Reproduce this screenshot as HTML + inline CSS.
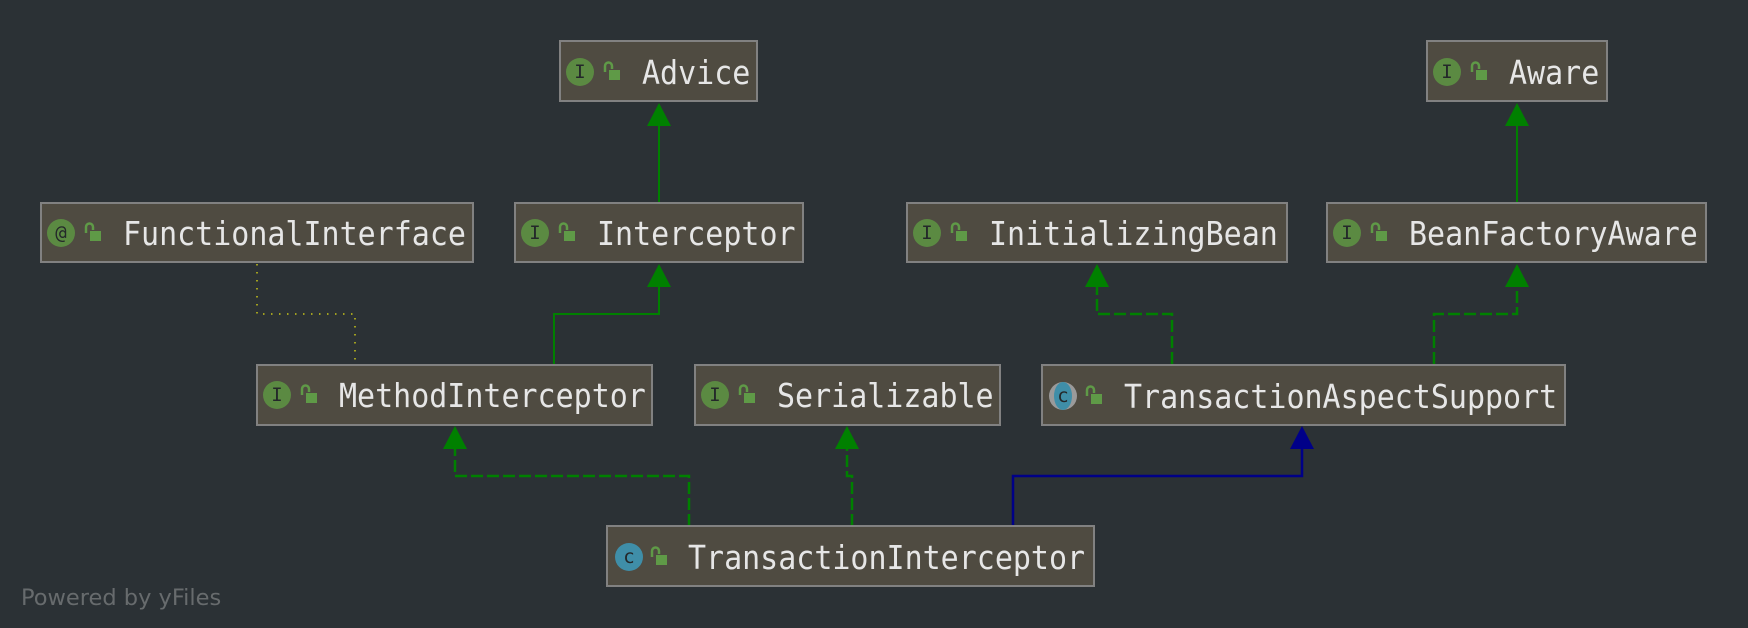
<!DOCTYPE html>
<html><head><meta charset="utf-8"><style>
html,body{margin:0;padding:0;background:#2b3135;width:1748px;height:628px;overflow:hidden}
svg{display:block}
.b{fill:#4f4b41;stroke:#818181;stroke-width:2}
.t{font-family:"DejaVu Sans Mono","Liberation Mono",monospace;font-size:30px;fill:#e6e6e6;transform-box:fill-box;transform-origin:center;transform:scaleY(1.1)}
.ic{font-family:"DejaVu Sans Mono","Liberation Mono",monospace;font-size:19px;fill:#24282a;text-anchor:middle}
.g{stroke:#008000;stroke-width:2;fill:none}
.d{stroke:#008000;stroke-width:2.5;fill:none;stroke-dasharray:12 4}
.ah{fill:#008000}
.lk{fill:#5f9a47}
.lks{stroke:#5f9a47;stroke-width:2.5;fill:none}
</style></head><body>
<svg width="1748" height="628" viewBox="0 0 1748 628" xmlns="http://www.w3.org/2000/svg">
<path class="g" d="M659 202V120"/><path class="ah" d="M659 103l-12 23h24z"/>
<path class="g" d="M1517 202V120"/><path class="ah" d="M1517 103l-12 23h24z"/>
<path class="g" d="M554 364V314H659V282"/><path class="ah" d="M659 264l-12 23h24z"/>
<path d="M257 264V314H355V364" stroke="#a0a020" stroke-width="2" fill="none" stroke-dasharray="1.5 6.5"/>
<path class="d" d="M1172 364V314H1097V285"/><path class="ah" d="M1097 264l-12 23h24z"/>
<path class="d" d="M1434 364V314H1517V285"/><path class="ah" d="M1517 264l-12 23h24z"/>
<path class="d" d="M689 526V476H455V447"/><path class="ah" d="M455 426l-12 23h24z"/>
<path class="d" d="M852 526V476H847V447"/><path class="ah" d="M847 426l-12 23h24z"/>
<path d="M1013 526V476H1302V447" stroke="#000088" stroke-width="2.5" fill="none"/><path d="M1302 426l-12 23h24z" fill="#000088"/>

<g>
<rect class="b" x="560" y="41" width="197" height="60"/>
<circle cx="580" cy="72" r="14" fill="#5b8a42"/><text class="ic" x="580" y="78">I</text>
<rect class="lk" x="609" y="70" width="11" height="10"/><path class="lks" d="M605 72V66a3.5 3.5 0 0 1 7 0v3"/>
<text class="t" x="642" y="83">Advice</text>
</g>
<g>
<rect class="b" x="1427" y="41" width="180" height="60"/>
<circle cx="1447" cy="72" r="14" fill="#5b8a42"/><text class="ic" x="1447" y="78">I</text>
<rect class="lk" x="1476" y="70" width="11" height="10"/><path class="lks" d="M1472 72V66a3.5 3.5 0 0 1 7 0v3"/>
<text class="t" x="1509" y="83">Aware</text>
</g>
<g>
<rect class="b" x="41" y="203" width="432" height="59"/>
<circle cx="61" cy="233" r="14" fill="#5b8a42"/><text class="ic" x="61" y="239">@</text>
<rect class="lk" x="90" y="231" width="11" height="10"/><path class="lks" d="M86 233V227a3.5 3.5 0 0 1 7 0v3"/>
<text class="t" x="123" y="244">FunctionalInterface</text>
</g>
<g>
<rect class="b" x="515" y="203" width="288" height="59"/>
<circle cx="535" cy="233" r="14" fill="#5b8a42"/><text class="ic" x="535" y="239">I</text>
<rect class="lk" x="564" y="231" width="11" height="10"/><path class="lks" d="M560 233V227a3.5 3.5 0 0 1 7 0v3"/>
<text class="t" x="597" y="244">Interceptor</text>
</g>
<g>
<rect class="b" x="907" y="203" width="380" height="59"/>
<circle cx="927" cy="233" r="14" fill="#5b8a42"/><text class="ic" x="927" y="239">I</text>
<rect class="lk" x="956" y="231" width="11" height="10"/><path class="lks" d="M952 233V227a3.5 3.5 0 0 1 7 0v3"/>
<text class="t" x="989" y="244">InitializingBean</text>
</g>
<g>
<rect class="b" x="1327" y="203" width="379" height="59"/>
<circle cx="1347" cy="233" r="14" fill="#5b8a42"/><text class="ic" x="1347" y="239">I</text>
<rect class="lk" x="1376" y="231" width="11" height="10"/><path class="lks" d="M1372 233V227a3.5 3.5 0 0 1 7 0v3"/>
<text class="t" x="1409" y="244">BeanFactoryAware</text>
</g>
<g>
<rect class="b" x="257" y="365" width="395" height="60"/>
<circle cx="277" cy="395" r="14" fill="#5b8a42"/><text class="ic" x="277" y="401">I</text>
<rect class="lk" x="306" y="393" width="11" height="10"/><path class="lks" d="M302 395V389a3.5 3.5 0 0 1 7 0v3"/>
<text class="t" x="339" y="406">MethodInterceptor</text>
</g>
<g>
<rect class="b" x="695" y="365" width="305" height="60"/>
<circle cx="715" cy="395" r="14" fill="#5b8a42"/><text class="ic" x="715" y="401">I</text>
<rect class="lk" x="744" y="393" width="11" height="10"/><path class="lks" d="M740 395V389a3.5 3.5 0 0 1 7 0v3"/>
<text class="t" x="777" y="406">Serializable</text>
</g>
<g>
<rect class="b" x="1042" y="365" width="523" height="60"/>
<ellipse cx="1063" cy="396" rx="14" ry="14" fill="#9a9a9a"/>
<ellipse cx="1063" cy="396" rx="9" ry="14" fill="#3f8ea8"/><text class="ic" x="1063" y="402">c</text>
<rect class="lk" x="1091" y="394" width="11" height="10"/><path class="lks" d="M1087 396V390a3.5 3.5 0 0 1 7 0v3"/>
<text class="t" x="1124" y="407">TransactionAspectSupport</text>
</g>
<g>
<rect class="b" x="607" y="526" width="487" height="60"/>
<circle cx="629" cy="557" r="14" fill="#3f8ea8"/><text class="ic" x="629" y="563">c</text>
<rect class="lk" x="656" y="555" width="11" height="10"/><path class="lks" d="M652 557V551a3.5 3.5 0 0 1 7 0v3"/>
<text class="t" x="688" y="568">TransactionInterceptor</text>
</g>
<text x="21" y="605" font-family="'DejaVu Sans','Liberation Sans',sans-serif" font-size="22.5" fill="#676b6d">Powered by yFiles</text>
</svg>
</body></html>
